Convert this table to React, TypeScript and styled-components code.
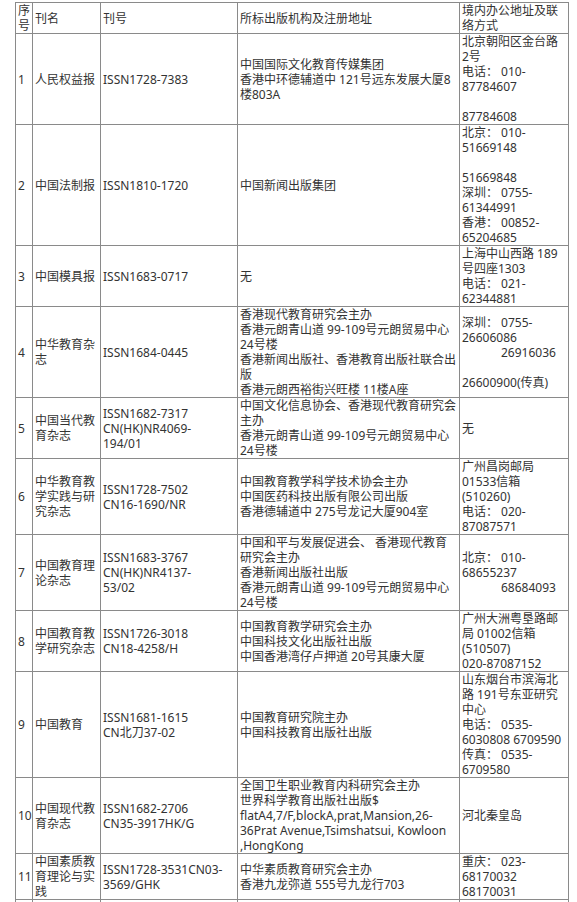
import React from "react"
import styled, { createGlobalStyle } from "styled-components"

type Line = string | { text: string; indent: number }

interface Row {
  no: string
  name: string[]
  issn: string[]
  org: string[]
  contact: Line[]
}

const rows: Row[] = [
  {
    no: "1",
    name: ["人民权益报"],
    issn: ["ISSN1728-7383"],
    org: ["中国国际文化教育传媒集团", "香港中环德辅道中 121号远东发展大厦8", "楼803A"],
    contact: ["北京朝阳区金台路", "2号", "电话： 010-", "87784607", "", "87784608"]
  },
  {
    no: "2",
    name: ["中国法制报"],
    issn: ["ISSN1810-1720"],
    org: ["中国新闻出版集团"],
    contact: [
      "北京： 010-",
      "51669148",
      "",
      "51669848",
      "深圳： 0755-",
      "61344991",
      "香港： 00852-",
      "65204685"
    ]
  },
  {
    no: "3",
    name: ["中国模具报"],
    issn: ["ISSN1683-0717"],
    org: ["无"],
    contact: ["上海中山西路 189", "号四座1303", "电话： 021-", "62344881"]
  },
  {
    no: "4",
    name: ["中华教育杂", "志"],
    issn: ["ISSN1684-0445"],
    org: [
      "香港现代教育研究会主办",
      "香港元朗青山道 99-109号元朗贸易中心",
      "24号楼",
      "香港新闻出版社、香港教育出版社联合出",
      "版",
      "香港元朗西裕街兴旺楼 11楼A座"
    ],
    contact: [
      "深圳： 0755-",
      "26606086",
      { text: "26916036", indent: 39 },
      "",
      "26600900(传真)"
    ]
  },
  {
    no: "5",
    name: ["中国当代教", "育杂志"],
    issn: ["ISSN1682-7317", "CN(HK)NR4069-", "194/01"],
    org: [
      "中国文化信息协会、香港现代教育研究会",
      "主办",
      "香港元朗青山道 99-109号元朗贸易中心",
      "24号楼"
    ],
    contact: ["无"]
  },
  {
    no: "6",
    name: ["中华教育教", "学实践与研", "究杂志"],
    issn: ["ISSN1728-7502", "CN16-1690/NR"],
    org: [
      "中国教育教学科学技术协会主办",
      "中国医药科技出版有限公司出版",
      "香港德辅道中 275号龙记大厦904室"
    ],
    contact: ["广州昌岗邮局", "01533信箱", "(510260)", "电话： 020-", "87087571"]
  },
  {
    no: "7",
    name: ["中国教育理", "论杂志"],
    issn: ["ISSN1683-3767", "CN(HK)NR4137-", "53/02"],
    org: [
      "中国和平与发展促进会、 香港现代教育",
      "研究会主办",
      "香港新闻出版社出版",
      "香港元朗青山道 99-109号元朗贸易中心",
      "24号楼"
    ],
    contact: ["北京： 010-", "68655237", { text: "68684093", indent: 39 }]
  },
  {
    no: "8",
    name: ["中国教育教", "学研究杂志"],
    issn: ["ISSN1726-3018", "CN18-4258/H"],
    org: ["中国教育教学研究会主办", "中国科技文化出版社出版", "中国香港湾仔卢押道 20号其康大厦"],
    contact: ["广州大洲粤垦路邮", "局 01002信箱", "(510507)", "020-87087152"]
  },
  {
    no: "9",
    name: ["中国教育"],
    issn: ["ISSN1681-1615", "CN北刀37-02"],
    org: ["中国教育研究院主办", "中国科技教育出版社出版"],
    contact: [
      "山东烟台市滨海北",
      "路 191号东亚研究",
      "中心",
      "电话： 0535-",
      "6030808 6709590",
      "传真： 0535-",
      "6709580"
    ]
  },
  {
    no: "10",
    name: ["中国现代教", "育杂志"],
    issn: ["ISSN1682-2706", "CN35-3917HK/G"],
    org: [
      "全国卫生职业教育内科研究会主办",
      "世界科学教育出版社出版$",
      "flatA4,7/F,blockA,prat,Mansion,26-",
      "36Prat Avenue,Tsimshatsui, Kowloon",
      ",HongKong"
    ],
    contact: ["河北秦皇岛"]
  },
  {
    no: "11",
    name: ["中国素质教", "育理论与实", "践"],
    issn: ["ISSN1728-3531CN03-", "3569/GHK"],
    org: ["中华素质教育研究会主办", "香港九龙弥道 555号九龙行703"],
    contact: ["重庆： 023-", "68170032", "68170031"]
  }
]

const GlobalStyle = createGlobalStyle`
  html, body {
    margin: 0;
    padding: 0;
    background: #ffffff;
  }
  body {
    font-family: "Noto Sans", "Noto Sans CJK SC", sans-serif;
  }
`

const Page = styled.div`
  padding: 2px 0 0 15px;
  overflow: hidden;
`

const Table = styled.table`
  border-collapse: collapse;
  table-layout: fixed;
  width: 553px;
  color: #333333;
  font-size: 12px;
`

const Cell = styled.td`
  border: 1px solid #8a8a8a;
  padding: 0 1px 0 2px;
  vertical-align: middle;
  overflow: hidden;
`

const EmptyRow = styled.tr`
  height: 20px;
`

const TextLine = styled.div<{ $indent?: number }>`
  height: 15px;
  line-height: 15px;
  white-space: nowrap;
  padding-left: ${(p) => p.$indent || 0}px;
`

const Lines: React.FC<{ lines: Line[] }> = ({ lines }) => (
  <>
    {lines.map((l, i) =>
      typeof l === "string" ? (
        <TextLine key={i}>{l}</TextLine>
      ) : (
        <TextLine key={i} $indent={l.indent}>
          {l.text}
        </TextLine>
      )
    )}
  </>
)

const App: React.FC = () => (
  <Page>
    <GlobalStyle />
    <Table>
      <colgroup>
        <col style={{ width: 17 }} />
        <col style={{ width: 68 }} />
        <col style={{ width: 137 }} />
        <col style={{ width: 222 }} />
        <col style={{ width: 109 }} />
      </colgroup>
      <tbody>
        <tr>
          <Cell>
            <Lines lines={["序", "号"]} />
          </Cell>
          <Cell>
            <Lines lines={["刊名"]} />
          </Cell>
          <Cell>
            <Lines lines={["刊号"]} />
          </Cell>
          <Cell>
            <Lines lines={["所标出版机构及注册地址"]} />
          </Cell>
          <Cell>
            <Lines lines={["境内办公地址及联", "络方式"]} />
          </Cell>
        </tr>
        {rows.map((r) => (
          <tr key={r.no}>
            <Cell>
              <Lines lines={[r.no]} />
            </Cell>
            <Cell>
              <Lines lines={r.name} />
            </Cell>
            <Cell>
              <Lines lines={r.issn} />
            </Cell>
            <Cell>
              <Lines lines={r.org} />
            </Cell>
            <Cell>
              <Lines lines={r.contact} />
            </Cell>
          </tr>
        ))}
        <EmptyRow>
          <Cell />
          <Cell />
          <Cell />
          <Cell />
          <Cell />
        </EmptyRow>
      </tbody>
    </Table>
  </Page>
)

export default App
